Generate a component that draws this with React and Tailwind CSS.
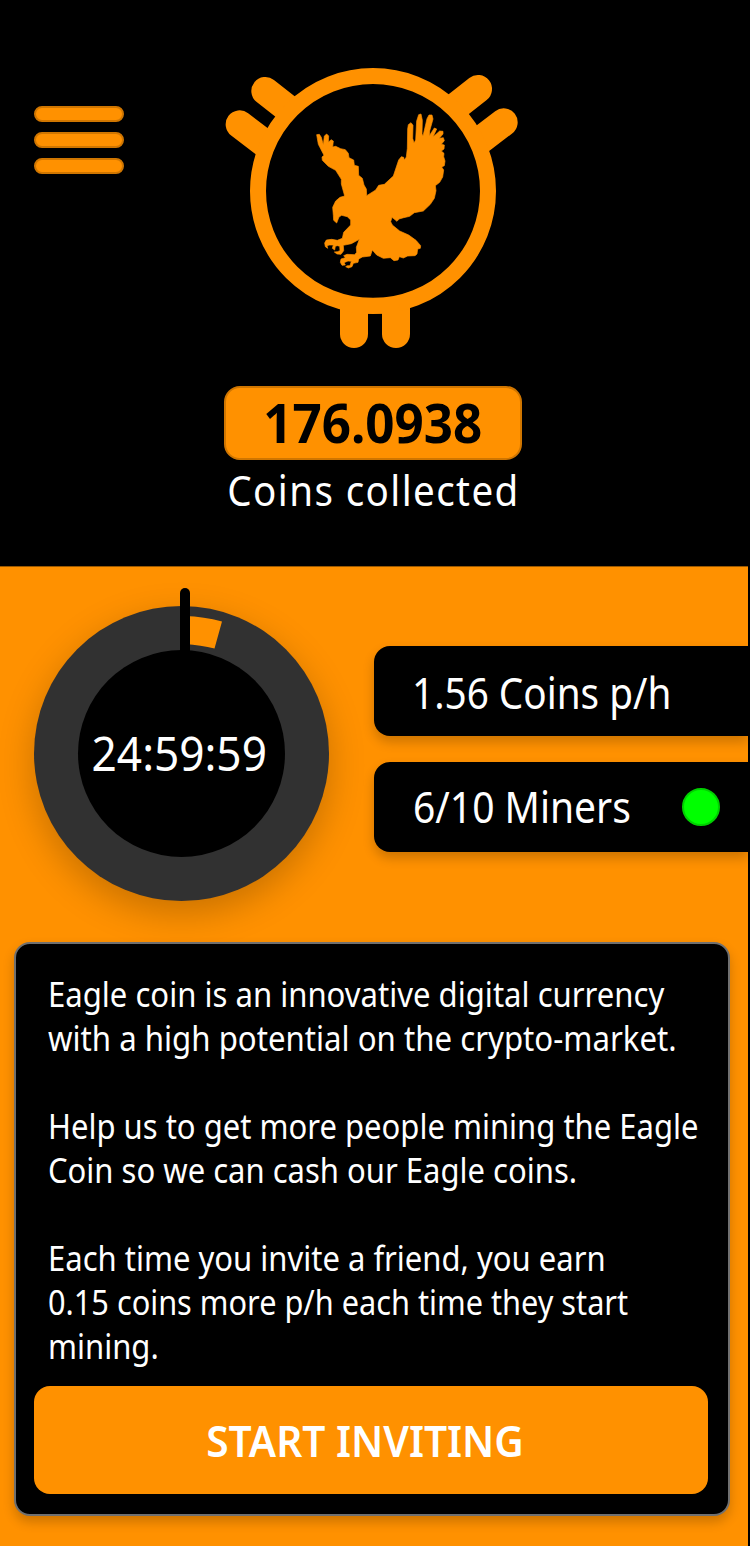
const EAGLE =
  "M305 239 L313 238 L319 247 L325 270 L328 243 L335 237 L341 243 L340 262 L348 254 L355 258 L353 276 L362 274 L377 281 L391 284 L400 295 L402 308 L416 315 L418 331 L430 334 L431 361 L442 370 L447 390 L454 402 L455 422 L482 405 L491 391 L508 388 L535 363 L551 315 L559 305 L566 307 L568 315 L574 306 L577 280 L578 222 L580 209 L588 203 L594 211 L593 250 L597 264 L602 255 L605 198 L611 179 L618 177 L622 196 L621 237 L624 243 L636 191 L642 180 L651 180 L654 192 L644 228 L643 242 L658 219 L665 222 L654 246 L674 228 L684 229 L684 237 L673 250 L685 248 L688 257 L679 268 L688 270 L687 282 L679 288 L687 295 L686 305 L690 318 L688 332 L680 336 L686 345 L683 366 L674 382 L661 392 L663 407 L658 430 L646 448 L625 468 L598 473 L584 484 L566 488 L552 492 L546 499 L531 487 L527 500 L532 510 L554 528 L581 540 L603 556 L617 572 L616 580 L608 582 L606 597 L600 602 L578 603 L565 609 L553 605 L549 615 L537 617 L526 608 L505 610 L485 600 L472 585 L466 603 L442 606 L431 612 L429 622 L415 625 L411 635 L400 639 L392 635 L397 632 L405 632 L409 619 L399 618 L387 623 L391 630 L381 631 L376 622 L378 612 L391 608 L386 602 L396 598 L419 599 L425 592 L424 577 L433 553 L409 566 L385 571 L386 587 L378 598 L366 597 L358 591 L367 590 L375 587 L374 574 L367 572 L361 574 L359 585 L352 580 L355 570 L342 570 L336 573 L338 580 L331 575 L329 564 L334 555 L350 553 L367 556 L382 550 L386 532 L407 510 L407 495 L397 485 L380 481 L372 486 L365 504 L356 496 L355 481 L353 457 L362 438 L375 427 L389 423 L379 387 L379 373 L362 346 L340 334 L322 316 L321 306 L327 301 L310 268 Z";

function Logo() {
  return (
    <svg viewBox="0 0 945 900" className="h-[300px] w-[315px]" aria-hidden="true">
      <g stroke="#ff9100" strokeWidth="84" strokeLinecap="round">
        <path d="M151 108 L215 158" />
        <path d="M74 208 L150 266" />
        <path d="M789 102 L727 151" />
        <path d="M866 202 L795 256" />
        <path d="M417 837 V755" />
        <path d="M543 837 V755" />
      </g>
      <ellipse cx="474" cy="408" rx="345" ry="345" fill="#000" stroke="#ff9100" strokeWidth="48" />
      <path d="M430 728 H532 L555 720 L550 776 H410Z" fill="#ff9100" />
      <path d={EAGLE} fill="#ff9100" stroke="#ff9100" strokeWidth="2" strokeLinejoin="round" />
    </svg>
  );
}

function MenuButton() {
  return (
    <button aria-label="Menu" className="mt-[106px] ml-[34px] flex h-fit w-[90px] flex-col gap-2.5">
      <span className="h-4 w-full rounded-full border-2 border-[#d07600] bg-[#ff9100]" />
      <span className="h-4 w-full rounded-full border-2 border-[#d07600] bg-[#ff9100]" />
      <span className="h-4 w-full rounded-full border-2 border-[#d07600] bg-[#ff9100]" />
    </button>
  );
}

function Timer() {
  return (
    <div className="relative mt-[39px] ml-[34px] flex size-[295px] shrink-0 items-center justify-center rounded-full bg-[#313131] shadow-[0_12px_36px_rgba(0,0,0,0.22)]">
      <svg viewBox="0 0 295 320" className="absolute -top-[18px] left-0 h-[320px] w-[295px]" aria-hidden="true">
        <circle cx="147.500" cy="165.500" r="103.500" fill="#000" />
        <path d="M151 28 Q170 28.500 188 33.500 L180.500 60.500 Q167 57 151 56Z" fill="#ff9100" />
        <path d="M151 5 V80" stroke="#000" strokeWidth="10" strokeLinecap="round" />
      </svg>
      <span className="relative -left-0.5 scale-x-[0.94] text-[47px] leading-none whitespace-nowrap">24:59:59</span>
    </div>
  );
}

const LINES = [
  ["Eagle coin is an innovative digital currency", "scale-x-[0.914]"],
  ["with a high potential on the crypto-market.", "scale-x-[0.917]"],
  ["", ""],
  ["Help us to get more people mining the Eagle", "scale-x-[0.912]"],
  ["Coin so we can cash our Eagle coins.", "scale-x-[0.912]"],
  ["", ""],
  ["Each time you invite a friend, you earn", "scale-x-[0.912]"],
  ["0.15 coins more p/h each time they start", "scale-x-[0.903]"],
  ["mining.", "scale-x-[0.912]"],
];

export default function App() {
  return (
    <div className="h-[1546px] w-[750px] overflow-hidden bg-black font-['Noto_Sans',sans-serif] text-white">
      <header className="flex h-[566px] w-full">
        <MenuButton />
        <div className="mt-[55px] ml-[91px] flex w-[315px] flex-col items-center">
          <Logo />
          <div className="mt-[31px] ml-px flex h-[74px] w-[298px] items-center justify-center rounded-2xl border-2 border-[#d07600] bg-[#ff9100] pb-[3px] text-black">
            <span className="scale-x-[0.947] text-[54px] leading-none font-bold">176.0938</span>
          </div>
          <p className="mt-[3px] ml-0.5 scale-x-[0.94] text-[41px] leading-[54px] tracking-[1.5px] whitespace-nowrap">Coins collected</p>
        </div>
      </header>
      <main className="h-[980px] w-[748px] overflow-hidden border-t border-[#9a5800] bg-[#ff9100]">
        <div className="flex h-[375px]">
          <Timer />
          <div className="mt-[79px] ml-[45px] flex grow flex-col gap-[26px]">
            <div className="flex h-[90px] items-center rounded-l-2xl bg-black pt-0.5 pl-[38px] shadow-[0_6px_12px_rgba(0,0,0,0.2)]">
              <span className="origin-left scale-x-[0.9] text-[43px] leading-none whitespace-nowrap">1.56 Coins p/h</span>
            </div>
            <div className="flex h-[90px] items-center justify-between rounded-l-2xl bg-black pr-7 pl-[39px] shadow-[0_6px_12px_rgba(0,0,0,0.2)]">
              <span className="origin-left scale-x-[0.907] pb-0.5 text-[43px] leading-none whitespace-nowrap">6/10 Miners</span>
              <span className="size-[38px] rounded-full border-2 border-[#00d000] bg-[#00ff00]" />
            </div>
          </div>
        </div>
        <section className="ml-3.5 h-[574px] w-[716px] rounded-2xl border-2 border-[#707070] bg-black pt-[28px] shadow-[0_6px_12px_rgba(0,0,0,0.2)]">
          <div className="ml-8">
            {LINES.map(([line, scale], i) => (
              <p key={i} className={`h-11 w-fit origin-left text-[34px] leading-[44px] whitespace-nowrap ${scale}`}>{line}</p>
            ))}
          </div>
          <button className="mt-[18px] ml-[18px] flex h-[108px] w-[674px] items-center justify-center rounded-2xl bg-[#ff9100] pr-[11px]">
            <span className="scale-x-[0.945] text-[43px] leading-none font-semibold whitespace-nowrap">START INVITING</span>
          </button>
        </section>
      </main>
    </div>
  );
}
